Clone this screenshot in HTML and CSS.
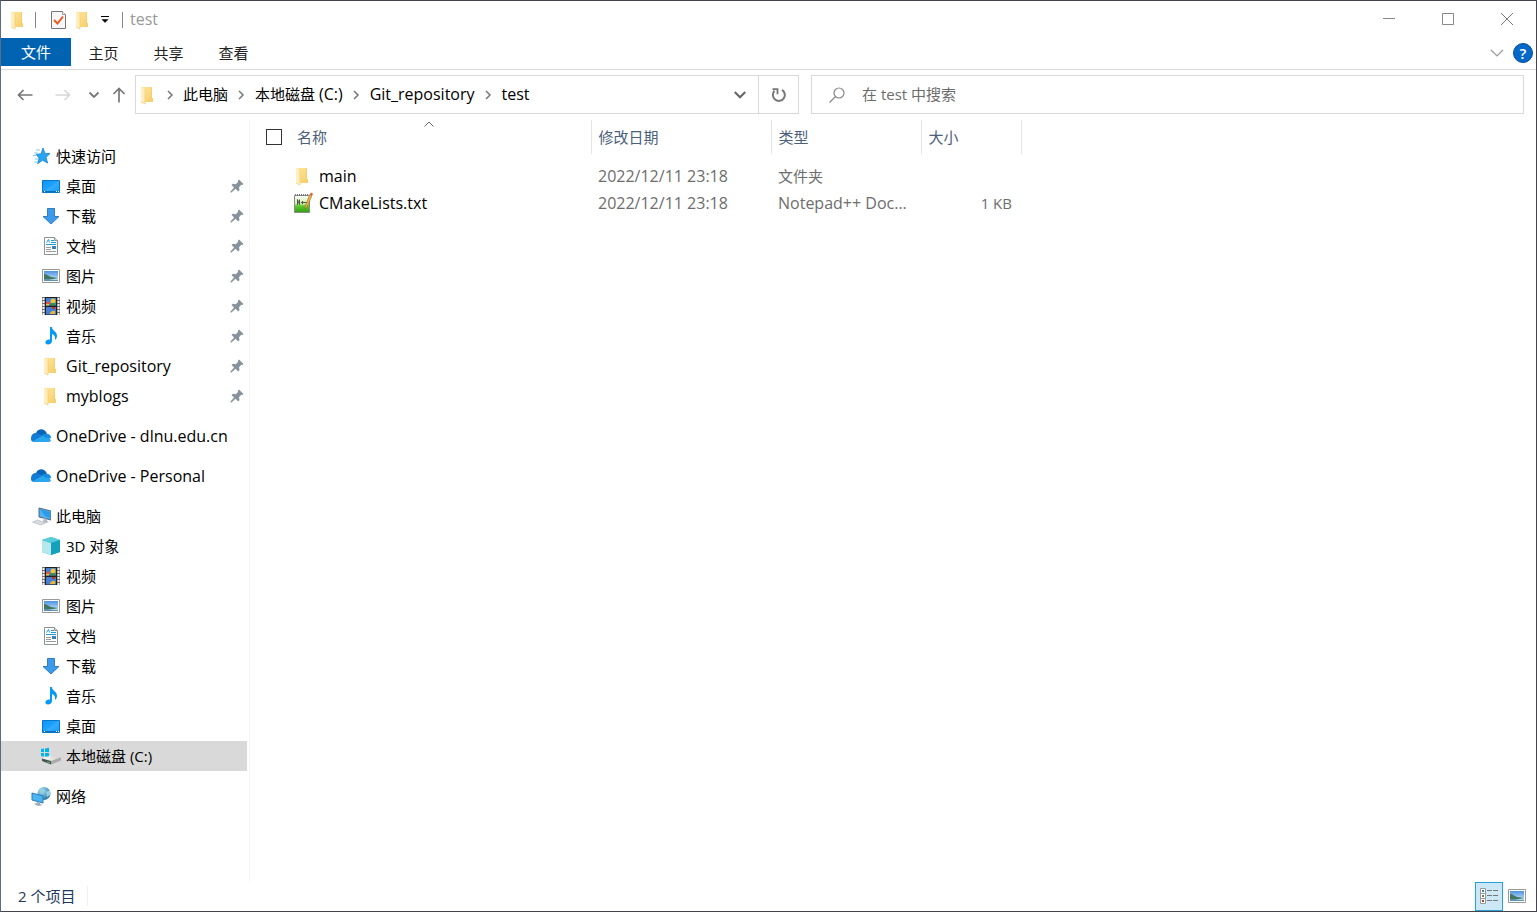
FILE: index.html
```html
<!DOCTYPE html>
<html lang="zh-CN">
<head>
<meta charset="utf-8">
<title>test</title>
<link rel="stylesheet" href="styles.css">
</head>
<body>
<svg class="sprite" aria-hidden="true">
  <defs>
    <linearGradient id="g-folder" x1="0" x2="1" y1="0" y2="1"><stop offset="0" stop-color="#ffe79f"/><stop offset="1" stop-color="#f6cd68"/></linearGradient>
    <linearGradient id="g-desk" x1="0" x2="1" y1="0" y2="1"><stop offset="0" stop-color="#0c94f5"/><stop offset=".5" stop-color="#1fa3ff"/><stop offset=".51" stop-color="#35adff"/><stop offset="1" stop-color="#149cfb"/></linearGradient>
    <linearGradient id="g-sky" x1="0" x2="0" y1="0" y2="1"><stop offset="0" stop-color="#4c92e2"/><stop offset="1" stop-color="#d3ecfb"/></linearGradient>
    <linearGradient id="g-note" x1="0" x2="0" y1="0" y2="1"><stop offset="0" stop-color="#ffffff"/><stop offset=".5" stop-color="#c9eda6"/><stop offset=".6" stop-color="#61cc2c"/><stop offset="1" stop-color="#2f9e16"/></linearGradient>
    <linearGradient id="g-drive" x1="0" x2="1" y1="0" y2="0"><stop offset="0" stop-color="#ffffff"/><stop offset="1" stop-color="#c9c9c9"/></linearGradient>
    <radialGradient id="g-globe" cx=".35" cy=".3" r=".8"><stop offset="0" stop-color="#b9e2f3"/><stop offset=".6" stop-color="#4a9cc4"/><stop offset="1" stop-color="#236a96"/></radialGradient>
    <symbol id="folder" viewBox="1 0 20 20"><path d="M4 2h11v11h1v4H6z" fill="url(#g-folder)"/><path d="M4 2l4 2v15l-4-2z" fill="#ffefc0"/><path d="M8 4v15l-4-2" fill="none" stroke="#f1cb69" stroke-width=".7"/><path d="M15 2v11h1v4h-2V2z" fill="#f5cf70"/></symbol>
    <symbol id="star" viewBox="0 0 20 20"><path d="M12 2l2 5.400 5 .2-4 3.700 1.600 5.700-5.100-2.800-4.800 3.600 1.400-5.800-3-3.600 5-.6z" fill="#2aa5f2" stroke="#1583cd" stroke-width=".8"/><path d="M5 4h4M3 7h4M2 9.500h3M4 13h3M3 16h4" stroke="#65bdef" stroke-width=".8"/></symbol>
    <symbol id="desktop" viewBox="0 0 20 20"><path d="M1.500 4.500h17v12h-17z" fill="url(#g-desk)" stroke="#0877c8"/><path d="M2 15.500h16" stroke="#0b70bb"/><path d="M3 15.500h1M15 15.500h1M17 15.500h1" stroke="#fff"/></symbol>
    <symbol id="download" viewBox="0 0 20 20"><path d="M6.500 2.500h7v8h4.500L10 18 2 10.500h4.500z" fill="#3b9aea" stroke="#2675b9" stroke-width=".9"/></symbol>
    <symbol id="document" viewBox="1 0 20 20"><path d="M4.500 1.500h10l3 3v14h-13z" fill="#fff" stroke="#8e9394"/><path d="M14.500 1.500v3h3" fill="#ddd" stroke="#8e9394"/><path d="M6.500 6.500l2-3 1 3M11 4.500h3M11 6.500h5M6 8.500h10" fill="none" stroke="#1a9bd8"/><path d="M6 11.500h5M6 13.500h5M6 15.500h10" stroke="#9b9b9b"/><path d="M12 10h4v3h-4z" fill="#3682bb"/></symbol>
    <symbol id="picture" viewBox="0 0 20 20"><path d="M1.500 3.500h17v13h-17z" fill="#fff" stroke="#9a9a9a"/><path d="M3 5h14v10H3z" fill="url(#g-sky)"/><path d="M3 8c3 0 4 2 7 3l7 1v1H3z" fill="#43765f"/><path d="M3 13h14v2H3z" fill="#5d93b4"/><path d="M8 14l9-2v2z" fill="#b8dbe2"/></symbol>
    <symbol id="video" viewBox="0 0 20 20"><path d="M1 1h18v18H1z" fill="#6b6b6b"/><path d="M4 1h12v18H4z" fill="#202020"/><path d="M5 2h10v7.500H5zM5 11h10v7.500H5z" fill="#487fd5"/><path d="M2.500 2v17M17.500 2v17" stroke="#f4f4f4" stroke-width="2" stroke-dasharray="2 1"/><circle cx="12" cy="5" r="2.500" fill="#f0c62e"/><path d="M10 7h4v2.500h-4z" fill="#3c912c"/><path d="M5 6h4v2H5z" fill="#dd5546"/><path d="M5 8h3v1.500H5z" fill="#e5c846"/><path d="M9 17l2-2h3v3H9z" fill="#edb72b"/><path d="M11 11h3v2h-3z" fill="#bd3723"/></symbol>
    <symbol id="music" viewBox="0 0 20 20"><path d="M9 1h2c0 4 5 4 5 9 0 2-1 3-2 4 .5-4-1-5-3-6v7c0 2-2 3.500-4 3.500-4 0-3-5 1-5H9z" fill="#0899f5"/></symbol>
    <symbol id="cloud" viewBox="1 0 20 16"><path d="M6 5c2-5 9-5 11 1l-6 4z" fill="#0864b8"/><path d="M1 11c0-4 2-6 5-6 2 0 3 1 5 2l5 4-9 3H5c-3 0-4-1-4-3z" fill="#107bd4"/><path d="M11 8c2-1 3-3 6-2 3 0 4 2 4 4l-5 2z" fill="#168dde"/><path d="M3 13l9-5 8 3c2 2 0 3-3 3H6c-1 0-2 0-3-1z" fill="#29a6ee"/></symbol>
    <symbol id="computer" viewBox="0 0 20 20"><path d="M8 2l12 3v9L8 11z" fill="#53b0f1" stroke="#52697a"/><path d="M9 3l5 7 5 2V6z" fill="#299ceb"/><path d="M12 12l4 1v2l2 1-3 1-4-2 2-1z" fill="#b1bbc1"/><path d="M1.500 16l5-2 8 3-5 2z" fill="#d7dce0" stroke="#b4bbc0" stroke-width=".7"/></symbol>
    <symbol id="cube" viewBox="0 0 20 20"><path d="M10 1l9 3v12l-9 3-9-3V4z" fill="#24b6cd"/><path d="M1 4l9 3v12l-9-3z" fill="#b5e8ec"/><path d="M10 1l9 3-9 3-9-3z" fill="#5acbd8"/><path d="M10 7l9-3v12l-9 3z" fill="#13a1bb"/></symbol>
    <symbol id="drive" viewBox="0 0 20 20"><path d="M0 3l3-.5V6H0zM4 2.400l4-.6V6H4zM0 7h3v3.500L0 10zM4 7h4v4l-4-.5z" fill="#00b4ee"/><path d="M1 12.500L8 10l12 1.500-10 3.500z" fill="url(#g-drive)"/><path d="M1 12.500l9 2.500v3.500L1 15z" fill="#4b514e"/><path d="M10 15l10-3.500v3l-10 4z" fill="#a9a9a9"/><path d="M6 15.300l3 .9v1l-3-.9z" fill="#42d46a"/></symbol>
    <symbol id="network" viewBox="0 0 20 20"><circle cx="13" cy="7.500" r="6.500" fill="url(#g-globe)"/><path d="M8 5l3-3 3 2-2 3zM15 6l4-2v5l-3 2z" fill="#94cfe2"/><path d="M1 7l11 3v7L1 14z" fill="#4eb3f2" stroke="#287eb8"/><path d="M6 16l3 1v1l3 1-5 1-4-2 3-1z" fill="#9badb7"/></symbol>
    <symbol id="pin" viewBox="0 0 14 14"><path d="M9 .5L13.500 5l-1.200 1-1-.2-2.300 2.500.5 2.800-1.300 1.300-2.700-2.700L1.500 13.500H.5v-1l3.600-3.900L1.500 6 2.900 4.700l2.800.5L8 3l-.2-1.300z" fill="#87939c"/></symbol>
    <symbol id="chev-right" viewBox="0 0 10 10"><path d="M3 1L7 5 3 9" fill="none" stroke="#777" stroke-width="1.500"/></symbol>
    <symbol id="chev-down" viewBox="0 0 12 10"><path d="M1.500 2.500L6 7l4.500-4.500" fill="none" stroke="currentColor" stroke-width="1.800"/></symbol>
    <symbol id="notepad" viewBox="0 0 20 22"><path d="M1.500 3.500h15v17h-15z" fill="url(#g-note)" stroke="#868d83"/><path d="M2 3h14" stroke="#777" stroke-width="2" stroke-dasharray="1 1"/><path d="M4.500 13V7.500l2 5V7.500M8 10.500h3M9.500 9v3M11 10.500h3" fill="none" stroke="#3e4a3a" stroke-width=".9"/><path d="M17 2l2 1.500L14 15l-2 2 .3-3z" fill="#f4b53d" stroke="#9b6a27" stroke-width=".6"/><path d="M17 2.500l1-2L20 1.700l-1 2z" fill="#db574a"/></symbol>
  </defs>
</svg>

<div class="window">
  <header class="titlebar">
    <svg class="icon"><use href="#folder"/></svg>
    <span class="divider divider-first"></span>
    <button class="plain" aria-label="属性"><svg class="icon" viewBox="0 0 20 20"><path d="M3.500 1.500h11l3 3v14h-14z" fill="#f7f7f7" stroke="#777"/><path d="M14.500 1.500v3h3" fill="#fff" stroke="#999"/><path d="M6 10l3.500 3.500L15 6.500" fill="none" stroke="#ee5a1c" stroke-width="2"/></svg></button>
    <button class="plain new-folder" aria-label="新建文件夹"><svg class="icon"><use href="#folder"/></svg></button>
    <button class="plain customize" aria-label="自定义快速访问工具栏"><svg width="8" height="8" viewBox="0 0 8 8"><path d="M0 .5h8" stroke="#000"/><path d="M1 3.500h6L4 6.500z" fill="#000" stroke="#000" stroke-width=".5"/></svg></button>
    <span class="divider"></span>
    <span class="title">test</span>
    <div class="controls">
      <button class="plain" aria-label="最小化"><svg width="14" height="14" viewBox="0 0 14 14"><path d="M1 6.500h12" stroke="#888"/></svg></button>
      <button class="plain" aria-label="最大化"><svg width="14" height="14" viewBox="0 0 14 14"><path d="M1.500 1.500h11v11h-11z" fill="none" stroke="#888"/></svg></button>
      <button class="plain" aria-label="关闭"><svg width="14" height="14" viewBox="0 0 14 14"><path d="M1 1l12 12M13 1L1 13" stroke="#777"/></svg></button>
    </div>
  </header>

  <nav class="tabs">
    <button class="tab tab-file">文件</button>
    <button class="tab">主页</button>
    <button class="tab">共享</button>
    <button class="tab">查看</button>
    <button class="plain expand" aria-label="展开功能区"><svg width="14" height="10" viewBox="0 0 14 10"><path d="M1 2l6 6 6-6" fill="none" stroke="#999" stroke-width="1.200"/></svg></button>
    <button class="help" aria-label="帮助">?</button>
  </nav>

  <div class="toolbar">
    <div class="history">
      <button class="plain" aria-label="后退"><svg width="16" height="14" viewBox="0 0 16 14"><path d="M15.500 7H1.500M6.500 2l-5 5 5 5" fill="none" stroke="#777" stroke-width="1.700"/></svg></button>
      <button class="plain forward" aria-label="前进" disabled><svg width="16" height="14" viewBox="0 0 16 14"><path d="M.5 7h14M9.500 2l5 5-5 5" fill="none" stroke="#d6d6d6" stroke-width="1.500"/></svg></button>
      <button class="plain recent" aria-label="最近浏览的位置"><svg width="12" height="10"><use href="#chev-down"/></svg></button>
      <button class="plain up" aria-label="上移"><svg width="14" height="16" viewBox="0 0 14 16"><path d="M7 15.500V1.500M1.500 7L7 1.500 12.500 7" fill="none" stroke="#777" stroke-width="1.700"/></svg></button>
    </div>
    <div class="address">
      <svg class="icon"><use href="#folder"/></svg>
      <svg class="sep"><use href="#chev-right"/></svg>
      <button class="plain crumb">此电脑</button>
      <svg class="sep"><use href="#chev-right"/></svg>
      <button class="plain crumb"><span>本地磁盘 <span class="latin">(C:)</span></span></button>
      <svg class="sep"><use href="#chev-right"/></svg>
      <button class="plain crumb latin">Git_repository</button>
      <svg class="sep"><use href="#chev-right"/></svg>
      <button class="plain crumb latin">test</button>
      <button class="plain previous" aria-label="上一个位置"><svg width="14" height="12"><use href="#chev-down"/></svg></button>
      <button class="plain refresh" aria-label="刷新"><svg width="16" height="16" viewBox="0 0 16 16"><path d="M11 2.800A6 6 0 1 1 3.500 3.800" fill="none" stroke="#777" stroke-width="2"/><path d="M1.500 2.200h5v5" fill="none" stroke="#777" stroke-width="1.800"/></svg></button>
    </div>
    <label class="search">
      <svg width="16" height="16" viewBox="0 0 16 16"><circle cx="10" cy="6" r="5" fill="none" stroke="#888" stroke-width="1.200"/><path d="M6.500 9.500L.5 15.500" stroke="#888" stroke-width="1.200"/></svg>
      <input type="search" placeholder="在 test 中搜索" aria-label="在 test 中搜索">
    </label>
  </div>

  <div class="content">
    <nav class="sidebar">
      <section class="group">
        <a class="item root" href="#"><svg class="icon"><use href="#star"/></svg>快速访问</a>
        <a class="item" href="#"><svg class="icon"><use href="#desktop"/></svg>桌面<svg class="pin"><use href="#pin"/></svg></a>
        <a class="item" href="#"><svg class="icon"><use href="#download"/></svg>下载<svg class="pin"><use href="#pin"/></svg></a>
        <a class="item" href="#"><svg class="icon"><use href="#document"/></svg>文档<svg class="pin"><use href="#pin"/></svg></a>
        <a class="item" href="#"><svg class="icon"><use href="#picture"/></svg>图片<svg class="pin"><use href="#pin"/></svg></a>
        <a class="item" href="#"><svg class="icon"><use href="#video"/></svg>视频<svg class="pin"><use href="#pin"/></svg></a>
        <a class="item" href="#"><svg class="icon"><use href="#music"/></svg>音乐<svg class="pin"><use href="#pin"/></svg></a>
        <a class="item latin" href="#"><svg class="icon"><use href="#folder"/></svg>Git_repository<svg class="pin"><use href="#pin"/></svg></a>
        <a class="item latin" href="#"><svg class="icon"><use href="#folder"/></svg>myblogs<svg class="pin"><use href="#pin"/></svg></a>
      </section>
      <section class="group"><a class="item root latin" href="#"><svg class="icon cloud"><use href="#cloud"/></svg>OneDrive - dlnu.edu.cn</a></section>
      <section class="group"><a class="item root latin" href="#"><svg class="icon cloud"><use href="#cloud"/></svg>OneDrive - Personal</a></section>
      <section class="group">
        <a class="item root" href="#"><svg class="icon"><use href="#computer"/></svg>此电脑</a>
        <a class="item" href="#"><svg class="icon"><use href="#cube"/></svg>3D 对象</a>
        <a class="item" href="#"><svg class="icon"><use href="#video"/></svg>视频</a>
        <a class="item" href="#"><svg class="icon"><use href="#picture"/></svg>图片</a>
        <a class="item" href="#"><svg class="icon"><use href="#document"/></svg>文档</a>
        <a class="item" href="#"><svg class="icon"><use href="#download"/></svg>下载</a>
        <a class="item" href="#"><svg class="icon"><use href="#music"/></svg>音乐</a>
        <a class="item" href="#"><svg class="icon"><use href="#desktop"/></svg>桌面</a>
        <a class="item selected" href="#" aria-current="page"><svg class="icon"><use href="#drive"/></svg>本地磁盘 (C:)</a>
      </section>
      <section class="group"><a class="item root" href="#"><svg class="icon"><use href="#network"/></svg>网络</a></section>
    </nav>

    <main class="files">
      <table>
        <colgroup><col class="col-name"><col class="col-date"><col class="col-type"><col class="col-size"></colgroup>
        <thead>
          <tr>
            <th scope="col" aria-sort="ascending"><div class="name-head"><input type="checkbox" aria-label="全选"><span>名称</span></div><svg class="sort" viewBox="0 0 10 6"><path d="M.5 5.500L5 1l4.500 4.500" fill="none" stroke="#666"/></svg></th>
            <th scope="col">修改日期</th>
            <th scope="col">类型</th>
            <th scope="col">大小</th>
          </tr>
        </thead>
        <tbody>
          <tr><td><a class="file latin" href="#"><svg class="icon"><use href="#folder"/></svg>main</a></td><td class="latin">2022/12/11 23:18</td><td>文件夹</td><td class="size"></td></tr>
          <tr><td><a class="file latin" href="#"><svg class="icon note"><use href="#notepad"/></svg>CMakeLists.txt</a></td><td class="latin">2022/12/11 23:18</td><td class="latin">Notepad++ Doc...</td><td class="size">1 KB</td></tr>
        </tbody>
      </table>
    </main>
  </div>

  <footer class="status">
    <span class="count">2 个项目</span>
    <div class="views">
      <button class="plain view active" aria-label="详细信息"><svg width="20" height="18" viewBox="0 0 20 18"><path d="M1.500 1.500h5v15h-5zM1.500 6.500h5M1.500 11.500h5" fill="#fff" stroke="#999"/><path d="M8 3.500h5M14 3.500h5M8 8.500h5M14 8.500h5M8 13.500h5M14 13.500h5" stroke="#777"/><path d="M3 3h2v2H3z" fill="#3487a5"/><path d="M3 8h2v2H3z" fill="#6a893a"/><path d="M3 13h2v2H3z" fill="#b64528"/></svg></button>
      <button class="plain view" aria-label="大缩略图"><svg class="icon"><use href="#picture"/></svg></button>
    </div>
  </footer>
</div>
</body>
</html>
```
FILE: styles.css
```css
* { box-sizing: border-box; }

body {
  margin: 0;
  color: #000;
  background: #fff;
  font: 15px/20px "Open Sans", "Noto Sans CJK SC", sans-serif;
}

button, input { font: inherit; color: inherit; }
a { color: inherit; text-decoration: none; }
svg { display: block; flex: none; }
.sprite { position: absolute; width: 0; height: 0; }
.icon { width: 20px; height: 20px; }
.latin { font-size: 16px; }

.plain {
  display: flex;
  align-items: center;
  justify-content: center;
  padding: 0;
  border: 0;
  background: none;
}

.window {
  display: flex;
  flex-direction: column;
  min-height: 100vh;
  border: 1px solid #45434d;
  border-left-color: #5c6c80;
}

.titlebar {
  display: flex;
  align-items: center;
  height: 37px;
  padding-left: 7px;
}
.divider { width: 1px; height: 16px; background: #888; }
.divider-first { margin: 0 12px 0 7px; }
.new-folder { margin-left: 5px; }
.customize { width: 8px; margin: 0 13px 0 8px; }
.title { padding: 0 0 2px 7px; color: #999; font-size: 16px; }
.controls { display: flex; align-self: flex-start; margin-left: auto; }
.controls .plain { width: 59px; height: 36px; }

.tabs {
  display: flex;
  align-items: center;
  height: 32px;
  padding-bottom: 2px;
  border-bottom: 1px solid #dadada;
}
.tab {
  height: 28px;
  width: 65px;
  padding: 0;
  border: 0;
  background: none;
  color: #222;
}
.tab-file { width: 70px; align-self: flex-start; background: #0063b1; color: #fff; }
.expand { width: 14px; margin-left: auto; }
.help {
  width: 20px;
  height: 20px;
  margin: 0 3px 0 9px;
  padding: 0;
  border: 1px solid #074d94;
  border-radius: 50%;
  background: #0669c9;
  color: #fff;
  font-weight: 600;
  line-height: 18px;
}

.toolbar {
  display: grid;
  grid-template-columns: 118px 664fr 725fr;
  padding: 5px 12px 5px 16px;
}
.history { display: flex; align-items: center; color: #777; }
.forward { margin-left: 22px; }
.recent { margin-left: 17px; }
.up { margin-left: 12px; }

.address {
  display: flex;
  align-items: center;
  height: 39px;
  padding-left: 2px;
  border: 1px solid #d9d9d9;
}
.sep { width: 10px; height: 10px; margin: 0 9px 0 8px; }
.address .icon + .sep { margin: 0 8px 0 7px; }
.crumb { padding-bottom: 2px; white-space: nowrap; }
.previous { width: 36px; margin-left: auto; color: #666; }
.refresh { width: 40px; height: 37px; border-left: 1px solid #d9d9d9; }

.search {
  display: flex;
  align-items: center;
  gap: 17px;
  margin-left: 12px;
  padding: 0 17px;
  border: 1px solid #d9d9d9;
}
.search input { flex: 1; padding: 0 0 2px; border: 0; outline: 0; background: none; }
.search input::placeholder { color: #6d6d6d; opacity: 1; }

.content { display: flex; flex: 1; }

.sidebar {
  width: 249px;
  padding: 22px 2px 0 0;
  border-right: 1px solid #f5f5f5;
}
.group { margin-bottom: 10px; }
.item {
  display: flex;
  align-items: center;
  gap: 5px;
  height: 30px;
  padding-left: 40px;
}
.root { padding-left: 30px; }
.cloud { height: 16px; }
.selected { background: #d9d9d9; }
.pin { width: 14px; height: 14px; margin: 0 3px 0 auto; }

.files { flex: 1; min-width: 0; padding-top: 1px; }
table { width: 771px; border-collapse: collapse; table-layout: fixed; }
.col-name { width: 341px; }
.col-date { width: 180px; }
.col-type { width: 150px; }
.col-size { width: 100px; }
th {
  position: relative;
  height: 34px;
  padding: 0 7px;
  border-right: 1px solid #e5e5e5;
  color: #4c607a;
  font-weight: 400;
  text-align: left;
}
.name-head { display: flex; align-items: center; gap: 15px; padding-left: 9px; }
.name-head input {
  appearance: none;
  width: 16px;
  height: 16px;
  margin: 0;
  border: 1px solid #333;
  background: #fff;
}
.sort { position: absolute; top: 1px; left: 174px; width: 10px; height: 6px; }
tbody::before { content: ""; display: block; height: 8px; }
td { height: 27px; padding: 0 7px; color: #6d6d6d; white-space: nowrap; }
.file { display: flex; align-items: center; gap: 6px; padding-left: 36px; color: #000; }
.note { height: 22px; }
.size { padding-right: 9px; text-align: right; }

.status {
  display: flex;
  align-items: center;
  justify-content: space-between;
  height: 30px;
  padding-left: 17px;
  color: #1e395b;
}
.count { padding-right: 12px; border-right: 1px solid #f0f0f0; }
.views { display: flex; padding-right: 5px; }
.view { width: 28px; height: 29px; }
.active { border: 1px solid #26a0da; background: #cce8f6; }
```
